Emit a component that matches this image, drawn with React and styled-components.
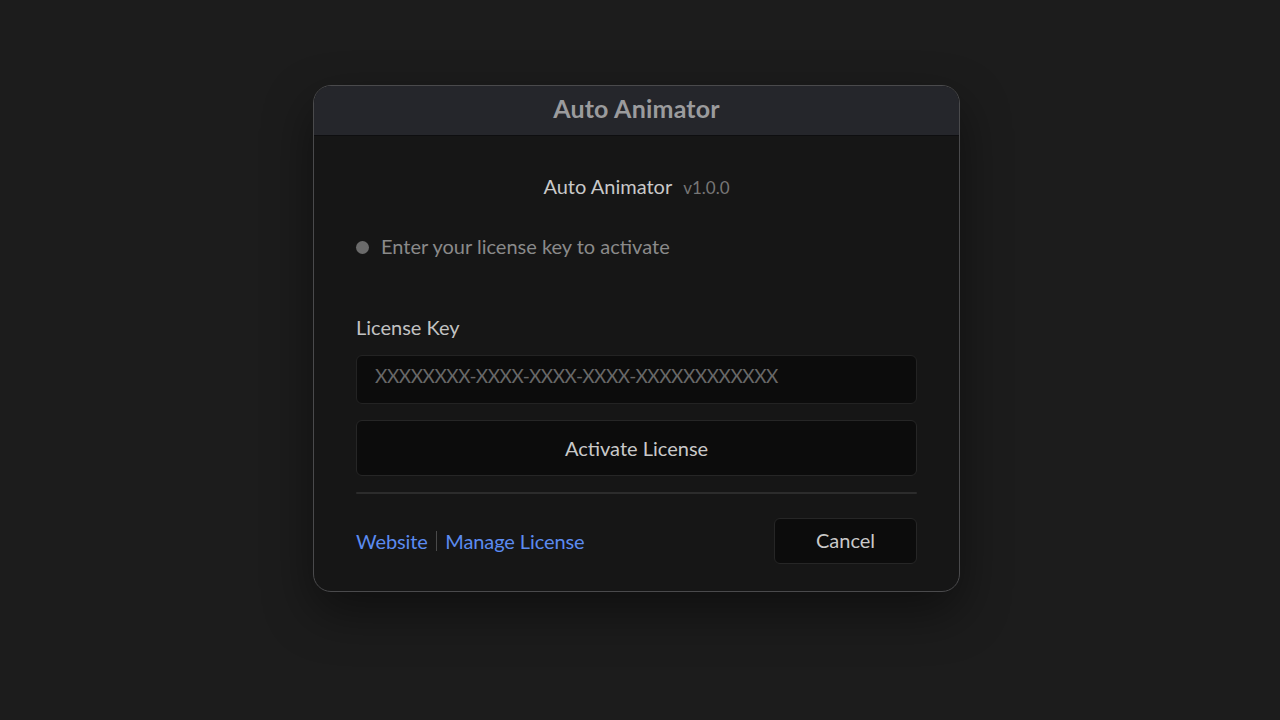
import React from "react";
import styled, { createGlobalStyle } from "styled-components";

const Global = createGlobalStyle`
  html, body { margin: 0; padding: 0; background: #1c1c1c; }
  body { font-family: "Lato", "Open Sans", sans-serif; }
  * { box-sizing: border-box; }
`;

const Page = styled.div`
  width: 1280px;
  height: 720px;
  display: flex;
  justify-content: center;
  align-items: flex-start;
  padding-top: 85px;
  padding-right: 7px;
  background: #1c1c1c;
`;

const Dialog = styled.div`
  width: 647px;
  height: 507px;
  border-radius: 18px;
  background: #161616;
  border: 1.5px solid #4a4a4c;
  box-shadow: 0 20px 50px rgba(0, 0, 0, 0.45);
  overflow: hidden;
  display: flex;
  flex-direction: column;
`;

const Header = styled.div`
  height: 50px;
  padding-bottom: 6px;
  background: #25262b;
  border-bottom: 1px solid #0e0e10;
  display: flex;
  align-items: center;
  justify-content: center;
  font-weight: 700;
  font-size: 25px;
  color: #9b9b9d;
  letter-spacing: 0.2px;
`;

const Body = styled.div`
  flex: 1;
  padding: 0 42px;
  display: flex;
  flex-direction: column;
`;

const VersionLine = styled.div`
  margin-top: 38px;
  display: flex;
  justify-content: center;
  align-items: baseline;
  gap: 11px;
  height: 26px;
`;

const AppName = styled.span`
  font-size: 20px;
  color: #c9c9c9;
`;

const Version = styled.span`
  font-size: 17px;
  color: #767676;
`;

const Status = styled.div`
  margin-top: 33px;
  display: flex;
  align-items: center;
  gap: 12px;
  font-size: 20px;
  color: #8a8a8a;
  height: 28px;
  padding-bottom: 2px;
`;

const Dot = styled.span`
  width: 13px;
  height: 13px;
  border-radius: 50%;
  background: #6b6b6b;
  flex: none;
  margin-top: 2px;
`;

const Label = styled.div`
  margin-top: 52px;
  font-size: 20px;
  color: #c2c2c2;
  height: 28px;
  line-height: 28px;
`;

const Input = styled.input`
  margin-top: 14px;
  height: 49px;
  width: 100%;
  background: #0c0c0c;
  border: 1.5px solid #232323;
  border-radius: 6px;
  padding: 0 18px 9px;
  font-family: inherit;
  font-size: 19px;
  letter-spacing: -0.45px;
  color: #c8c8c8;
  outline: none;
  &::placeholder { color: #686868; }
`;

const Button = styled.button`
  height: ${p => p.$h}px;
  background: #0c0c0c;
  border: 1.5px solid #262626;
  border-radius: 6px;
  font-family: inherit;
  font-size: 20px;
  color: #c9c9c9;
  cursor: pointer;
  padding: 0;
`;

const WideButton = styled(Button)`
  margin-top: 16px;
  width: 100%;
`;

const Separator = styled.div`
  margin-top: 16px;
  height: 2px;
  background: #2c2c2c;
  border-radius: 1px;
`;

const Footer = styled.div`
  margin-top: 24px;
  display: flex;
  align-items: center;
  justify-content: space-between;
`;

const Links = styled.div`
  display: flex;
  align-items: center;
  gap: 8px;
  font-size: 20px;
  letter-spacing: -0.1px;
`;

const Link = styled.a`
  color: #5b8bf0;
  text-decoration: none;
`;

const Pipe = styled.span`
  width: 1.5px;
  height: 20px;
  background: #4a4a4a;
`;

const CancelButton = styled(Button)`
  width: 143px;
  margin-right: 0;
  padding-bottom: 3px;
`;

export default function App() {
  return (
    <>
      <Global />
      <Page>
        <Dialog>
          <Header>Auto Animator</Header>
          <Body>
            <VersionLine>
              <AppName>Auto Animator</AppName>
              <Version>v1.0.0</Version>
            </VersionLine>
            <Status>
              <Dot />
              Enter your license key to activate
            </Status>
            <Label>License Key</Label>
            <Input placeholder="XXXXXXXX-XXXX-XXXX-XXXX-XXXXXXXXXXXX" />
            <WideButton $h={56}>Activate License</WideButton>
            <Separator />
            <Footer>
              <Links>
                <Link href="#">Website</Link>
                <Pipe />
                <Link href="#">Manage License</Link>
              </Links>
              <CancelButton $h={46}>Cancel</CancelButton>
            </Footer>
          </Body>
        </Dialog>
      </Page>
    </>
  );
}
